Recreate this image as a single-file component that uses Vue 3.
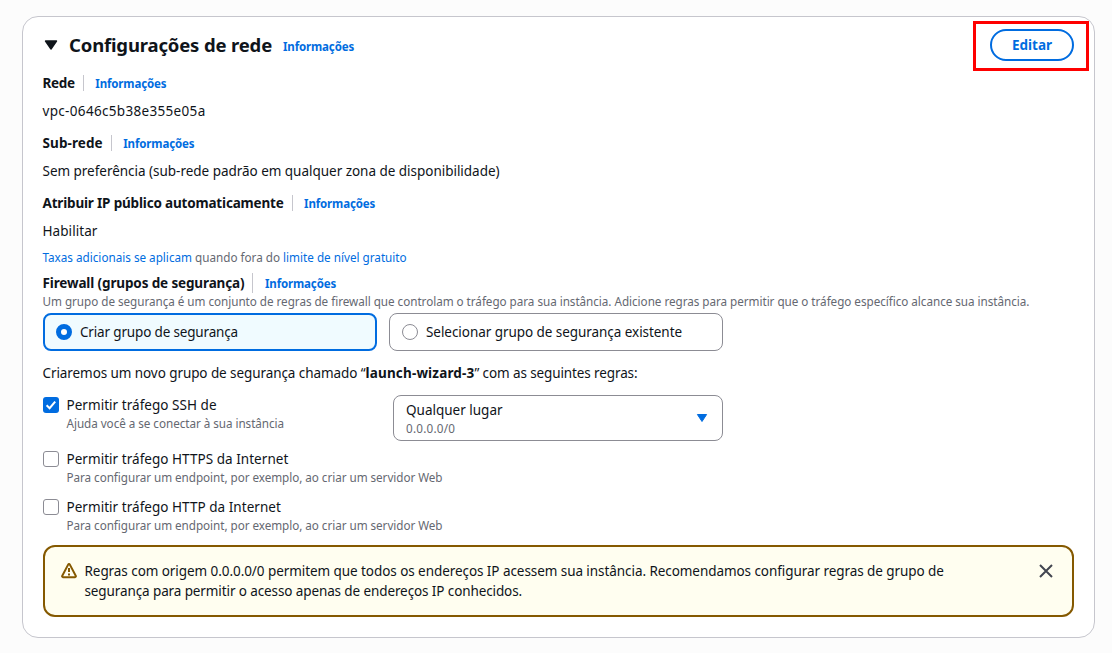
<script setup>
const fields = [
  { label: 'Rede', value: 'vpc-0646c5b38e355e05a', k: 'rede' },
  { label: 'Sub-rede', value: 'Sem preferência (sub-rede padrão em qualquer zona de disponibilidade)', k: 'sub' },
  { label: 'Atribuir IP público automaticamente', value: 'Habilitar', k: 'ip' },
]
</script>

<template>
  <main class="page">
    <section class="card">
      <header class="head">
        <svg class="caret" width="14" height="10" viewBox="0 0 14 10"><path d="M1.5 1h11L7 9z" fill="#0f141a" stroke="#0f141a" stroke-width="1.4" stroke-linejoin="round" /></svg>
        <h2>Configurações de rede</h2>
        <a class="info title-info">Informações</a>
        <div class="highlight"><button class="edit">Editar</button></div>
      </header>

      <div v-for="f in fields" :key="f.k" class="field">
        <div class="label-row">
          <span class="label" :class="'l-' + f.k">{{ f.label }}</span>
          <span class="rule"></span>
          <a class="info">Informações</a>
        </div>
        <div class="value" :class="'v-' + f.k">{{ f.value }}</div>
      </div>

      <p class="small fees"><a>Taxas adicionais se aplicam</a> quando fora do <a>limite de nível gratuito</a></p>

      <div class="label-row firewall">
        <span class="label l-fw">Firewall (grupos de segurança)</span>
        <span class="rule tall"></span>
        <a class="info">Informações</a>
      </div>
      <p class="small desc">Um grupo de segurança é um conjunto de regras de firewall que controlam o tráfego para sua instância. Adicione regras para permitir que o tráfego específico alcance sua instância.</p>

      <div class="tiles">
        <div class="tile on"><span class="radio"></span><span class="t-create">Criar grupo de segurança</span></div>
        <div class="tile"><span class="radio"></span><span class="t-select">Selecionar grupo de segurança existente</span></div>
      </div>

      <p class="notice">Criaremos um novo grupo de segurança chamado “<b>launch-wizard-3</b><span class="tail">” com as seguintes regras:</span></p>

      <div class="ssh-row">
        <div class="check">
          <span class="box checked"><svg width="16" height="16" viewBox="0 0 16 16"><path d="M3.6 8.3l3 2.9L12.2 4.6" fill="none" stroke="#fff" stroke-width="2" /></svg></span>
          <div><div class="c-label">Permitir tráfego SSH de</div><div class="small c-desc">Ajuda você a se conectar à sua instância</div></div>
        </div>
        <div class="select">
          <div><div class="s-label">Qualquer lugar</div><div class="small s-desc">0.0.0.0/0</div></div>
          <svg width="12" height="10" viewBox="0 0 12 10"><path d="M1.4 1.5h9.2L6 8.5z" fill="#006ce0" stroke="#006ce0" stroke-linejoin="round" /></svg>
        </div>
      </div>
      <div class="check https">
        <span class="box"></span>
        <div><div class="c-label">Permitir tráfego HTTPS da Internet</div><div class="small c-desc">Para configurar um endpoint, por exemplo, ao criar um servidor Web</div></div>
      </div>
      <div class="check http">
        <span class="box"></span>
        <div><div class="c-label">Permitir tráfego HTTP da Internet</div><div class="small c-desc">Para configurar um endpoint, por exemplo, ao criar um servidor Web</div></div>
      </div>

      <div class="alert">
        <svg class="warn" width="16" height="16" viewBox="0 0 16 16" fill="none" stroke="#855900" stroke-width="2" stroke-linejoin="round"><path d="M7.15 1.6 1.15 13a.9.9 0 0 0 .8 1.2h12.1a.9.9 0 0 0 .8-1.2l-6-11.4a.96.96 0 0 0-1.7 0z" /><path d="M8 5v4M8 10.4v2" /></svg>
        <p>Regras com origem 0.0.0.0/0 permitem que todos os endereços IP acessem sua instância. Recomendamos configurar regras de grupo de<br><span class="second">segurança para permitir o acesso apenas de endereços IP conhecidos.</span></p>
        <svg class="close" width="14" height="14" viewBox="0 0 14 14"><path d="M1 1l12 12M13 1L1 13" stroke="#424650" stroke-width="2" /></svg>
      </div>
    </section>
  </main>
</template>

<style>
body { margin: 0; background: #fcfcfc; }
</style>
<style scoped>
* { box-sizing: border-box; }
.page {
  height: 653px;
  padding: 16px 17px 0 22px;
  background: #fcfcfc;
  color: #0f141a;
  font: 13.5px/20px "Noto Sans", "Open Sans", sans-serif;
  white-space: nowrap;
  overflow: hidden;
}
p, h2 { margin: 0; }
.card {
  height: 622px;
  border: 1px solid #c6c6cd;
  border-radius: 16px;
  background: #fff;
  padding: 0 20px;
}
.head { display: flex; align-items: center; height: 56px; margin-right: -15px; }
.caret { margin-left: 1px; flex: none; }
h2 { margin-left: 11px; width: 214px; font-size: 18.5px; line-height: 24px; font-weight: 700; letter-spacing: -0.157px; }
.info { color: #006ce0; font-size: 11.5px; font-weight: 700; letter-spacing: -0.14px; margin-top: 2px; }
.title-info { margin-top: 4px; }
.highlight {
  margin-left: auto;
  margin-top: 2px;
  width: 116px;
  height: 50px;
  border: 3px solid #fe0000;
  display: flex;
  align-items: center;
  padding: 0 0 2px 14px;
}
.edit {
  width: 84px;
  height: 32px;
  padding: 0;
  border: 2px solid #006ce0;
  border-radius: 16px;
  background: #fff;
  color: #006ce0;
  font: 700 13.5px/20px "Noto Sans", sans-serif;
}
.field { margin-bottom: 12px; }
.label-row { display: flex; align-items: center; height: 20px; }
.label-row, .value, .fees, .desc, .notice { margin-left: -0.5px; }
.label { font-weight: 700; }
.l-rede { letter-spacing: -0.3px; }
.l-sub { letter-spacing: 0.1px; }
.l-ip { letter-spacing: -0.18px; }
.l-fw { letter-spacing: -0.13px; }
.rule { width: 1px; height: 16px; background: #c6c6cd; margin: 0 11.5px 0 8px; }
.rule.tall { height: 20px; }
.value { margin-top: 8px; }
.v-rede { letter-spacing: 0.324px; }
.v-sub { letter-spacing: -0.026px; }
.v-ip { letter-spacing: 0.067px; }
.small { font-size: 11.7px; line-height: 16px; color: #656871; }
.fees { margin-top: -4px; }
.fees a { color: #006ce0; }
.firewall { margin-top: 8px; }
.desc { letter-spacing: -0.034px; }
.tiles { display: flex; gap: 12px; margin-top: 4px; }
.tile {
  width: 334px;
  height: 38px;
  border: 1px solid #8c8c94;
  border-radius: 8px;
  display: flex;
  align-items: center;
  gap: 8px;
  padding-left: 12px;
}
.tile.on { border: 2px solid #006ce0; background: #f0fbff; padding-left: 11px; }
.radio { width: 16px; height: 16px; border: 1px solid #8c8c94; border-radius: 50%; background: #fff; }
.on .radio { border: 5px solid #006ce0; }
.t-create { letter-spacing: -0.163px; }
.t-select { letter-spacing: -0.054px; }
.notice { margin-top: 12px; letter-spacing: -0.08px; }
.notice b { letter-spacing: 0.17px; }
.tail { letter-spacing: -0.11px; }
.ssh-row { display: flex; margin-top: 12px; height: 46px; }
.ssh-row .check { width: 350px; }
.check { display: flex; gap: 7.5px; height: 36px; }
.box { width: 16px; height: 16px; margin-top: 2px; border: 1px solid #8c8c94; border-radius: 3px; background: #fff; }
.box.checked { border: 0; background: #006ce0; }
.box svg { display: block; }
.c-label { letter-spacing: 0.04px; }
.c-desc { letter-spacing: -0.044px; }
.select {
  width: 330px;
  height: 46px;
  border: 1px solid #8c8c94;
  border-radius: 8px;
  display: flex;
  align-items: center;
  justify-content: space-between;
  padding: 0 14px 0 12px;
}
.s-label { line-height: 18px; }
.s-desc { letter-spacing: 0.22px; padding-top: 1px; margin-bottom: -1px; }
.https { margin-top: 8px; }
.http { margin-top: 12px; }
.alert {
  display: flex;
  width: 1031px;
  height: 72px;
  margin-top: 12px;
  border: 2px solid #855900;
  border-radius: 12px;
  background: #fffef0;
  padding: 14px 18px 0 16px;
}
.warn { margin: 2px 7.5px 0 0; flex: none; }
.alert p { letter-spacing: -0.065px; }
.second { letter-spacing: -0.107px; }
.close { margin: 3px 1px 0 auto; flex: none; }
</style>
